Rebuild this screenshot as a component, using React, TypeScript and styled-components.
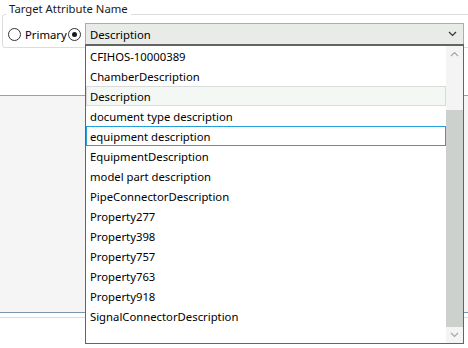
import React from 'react';
import styled, { createGlobalStyle } from 'styled-components';

const GlobalStyle = createGlobalStyle`
	html, body {
		margin: 0;
		padding: 0;
		background: #ffffff;
	}
	body {
		font-family: 'Noto Sans', 'Liberation Sans', sans-serif;
		font-size: 11.3px;
		color: #000000;
	}
`;

const Page = styled.div`
	position: relative;
	width: 468px;
	height: 348px;
	overflow: hidden;
	background: #ffffff;
`;

const GroupBox = styled.div`
	position: relative;
	margin: 14px 0 0 2px;
	width: 480px;
	height: 34px;
	box-sizing: border-box;
	border: 1px solid #dcdcdc;
	border-radius: 3px;
	padding: 8px 0 0 5px;
	display: flex;
	align-items: flex-start;
`;

const GroupTitle = styled.span`
	position: absolute;
	top: -14px;
	left: 3px;
	padding: 0 3px;
	background: #ffffff;
	line-height: 16px;
	color: #1a1a1a;
`;

const RadioLabel = styled.label<{ $width: number }>`
	display: flex;
	align-items: center;
	width: ${(p) => p.$width}px;
	height: 22px;
	gap: 4px;
	color: #000000;
`;

const RadioCircle = styled.span<{ $checked?: boolean }>`
	flex: none;
	width: 11px;
	height: 11px;
	border: 1px solid #333333;
	border-radius: 50%;
	background: #ffffff;
	display: flex;
	align-items: center;
	justify-content: center;

	&::after {
		content: '';
		display: ${(p) => (p.$checked ? 'block' : 'none')};
		width: 5px;
		height: 5px;
		border-radius: 50%;
		background: #1a1a1a;
	}
`;

const Combo = styled.div`
	width: 379px;
	height: 22px;
	box-sizing: border-box;
	border: 1px solid #adadad;
	background: #e9ebe9;
	display: flex;
	align-items: center;
	justify-content: space-between;
	padding: 0 6px 0 4px;
`;

const Panel = styled.div`
	margin-top: 47px;
	height: 216px;
	border-top: 1px solid #a0a0a0;
	border-bottom: 1px solid #7a97b0;
	background: #f6f5f5;
`;

const PanelShadow = styled.div`
	margin-top: 4px;
	height: 1px;
	background: #d4dde4;
`;

const DropDown = styled.div`
	position: absolute;
	left: 85px;
	top: 44px;
	width: 379px;
	height: 300px;
	box-sizing: border-box;
	border: 1px solid #646464;
	border-top-width: 2px;
	background: #ffffff;
	display: flex;
`;

const List = styled.ul`
	flex: 1;
	list-style: none;
	margin: 0;
	padding: 0;
`;

const Item = styled.li<{ $state?: 'selected' | 'hover' }>`
	height: 20px;
	box-sizing: border-box;
	padding: 0 4px 0 3px;
	display: flex;
	align-items: center;
	border: 1px solid
		${(p) =>
			p.$state === 'selected' ? '#dadada' : p.$state === 'hover' ? '#26a0da' : 'transparent'};
	background: ${(p) => (p.$state === 'selected' ? '#f4f8f4' : 'transparent')};
	white-space: nowrap;
`;

const ScrollBar = styled.div`
	width: 17px;
	background: #f4f4f4;
	display: flex;
	flex-direction: column;
	align-items: stretch;
`;

const ScrollArrow = styled.div`
	height: 17px;
	display: flex;
	align-items: center;
	justify-content: center;
`;

const ScrollTrack = styled.div`
	flex: 1;
	display: flex;
	flex-direction: column;
	padding-top: 47px;
`;

const ScrollThumb = styled.div`
	height: 217px;
	background: #cdd1cd;
`;

const Chevron = ({ up, color }: { up?: boolean; color: string }) => (
	<svg width="9" height="6" viewBox="0 0 9 6">
		<path
			d={up ? 'M1 5 L4.5 1.5 L8 5' : 'M1 1 L4.5 4.5 L8 1'}
			fill="none"
			stroke={color}
			strokeWidth="1.2"
		/>
	</svg>
);

const items = [
	'CFIHOS-10000389',
	'ChamberDescription',
	'Description',
	'document type description',
	'equipment description',
	'EquipmentDescription',
	'model part description',
	'PipeConnectorDescription',
	'Property277',
	'Property398',
	'Property757',
	'Property763',
	'Property918',
	'SignalConnectorDescription',
];

function App() {
	return (
		<Page>
			<GlobalStyle />
			<GroupBox>
				<GroupTitle>Target Attribute Name</GroupTitle>
				<RadioLabel $width={60}>
					<RadioCircle />
					Primary
				</RadioLabel>
				<RadioLabel $width={17}>
					<RadioCircle $checked />
				</RadioLabel>
				<Combo>
					<span>Description</span>
					<Chevron color="#333333" />
				</Combo>
			</GroupBox>
			<Panel />
			<PanelShadow />
			<DropDown>
				<List>
					{items.map((name) => (
						<Item
							key={name}
							$state={
								name === 'Description'
									? 'selected'
									: name === 'equipment description'
									? 'hover'
									: undefined
							}
						>
							{name}
						</Item>
					))}
				</List>
				<ScrollBar>
					<ScrollArrow>
						<Chevron up color="#a6a6a6" />
					</ScrollArrow>
					<ScrollTrack>
						<ScrollThumb />
					</ScrollTrack>
					<ScrollArrow>
						<Chevron color="#a6a6a6" />
					</ScrollArrow>
				</ScrollBar>
			</DropDown>
		</Page>
	);
}

export default App;
